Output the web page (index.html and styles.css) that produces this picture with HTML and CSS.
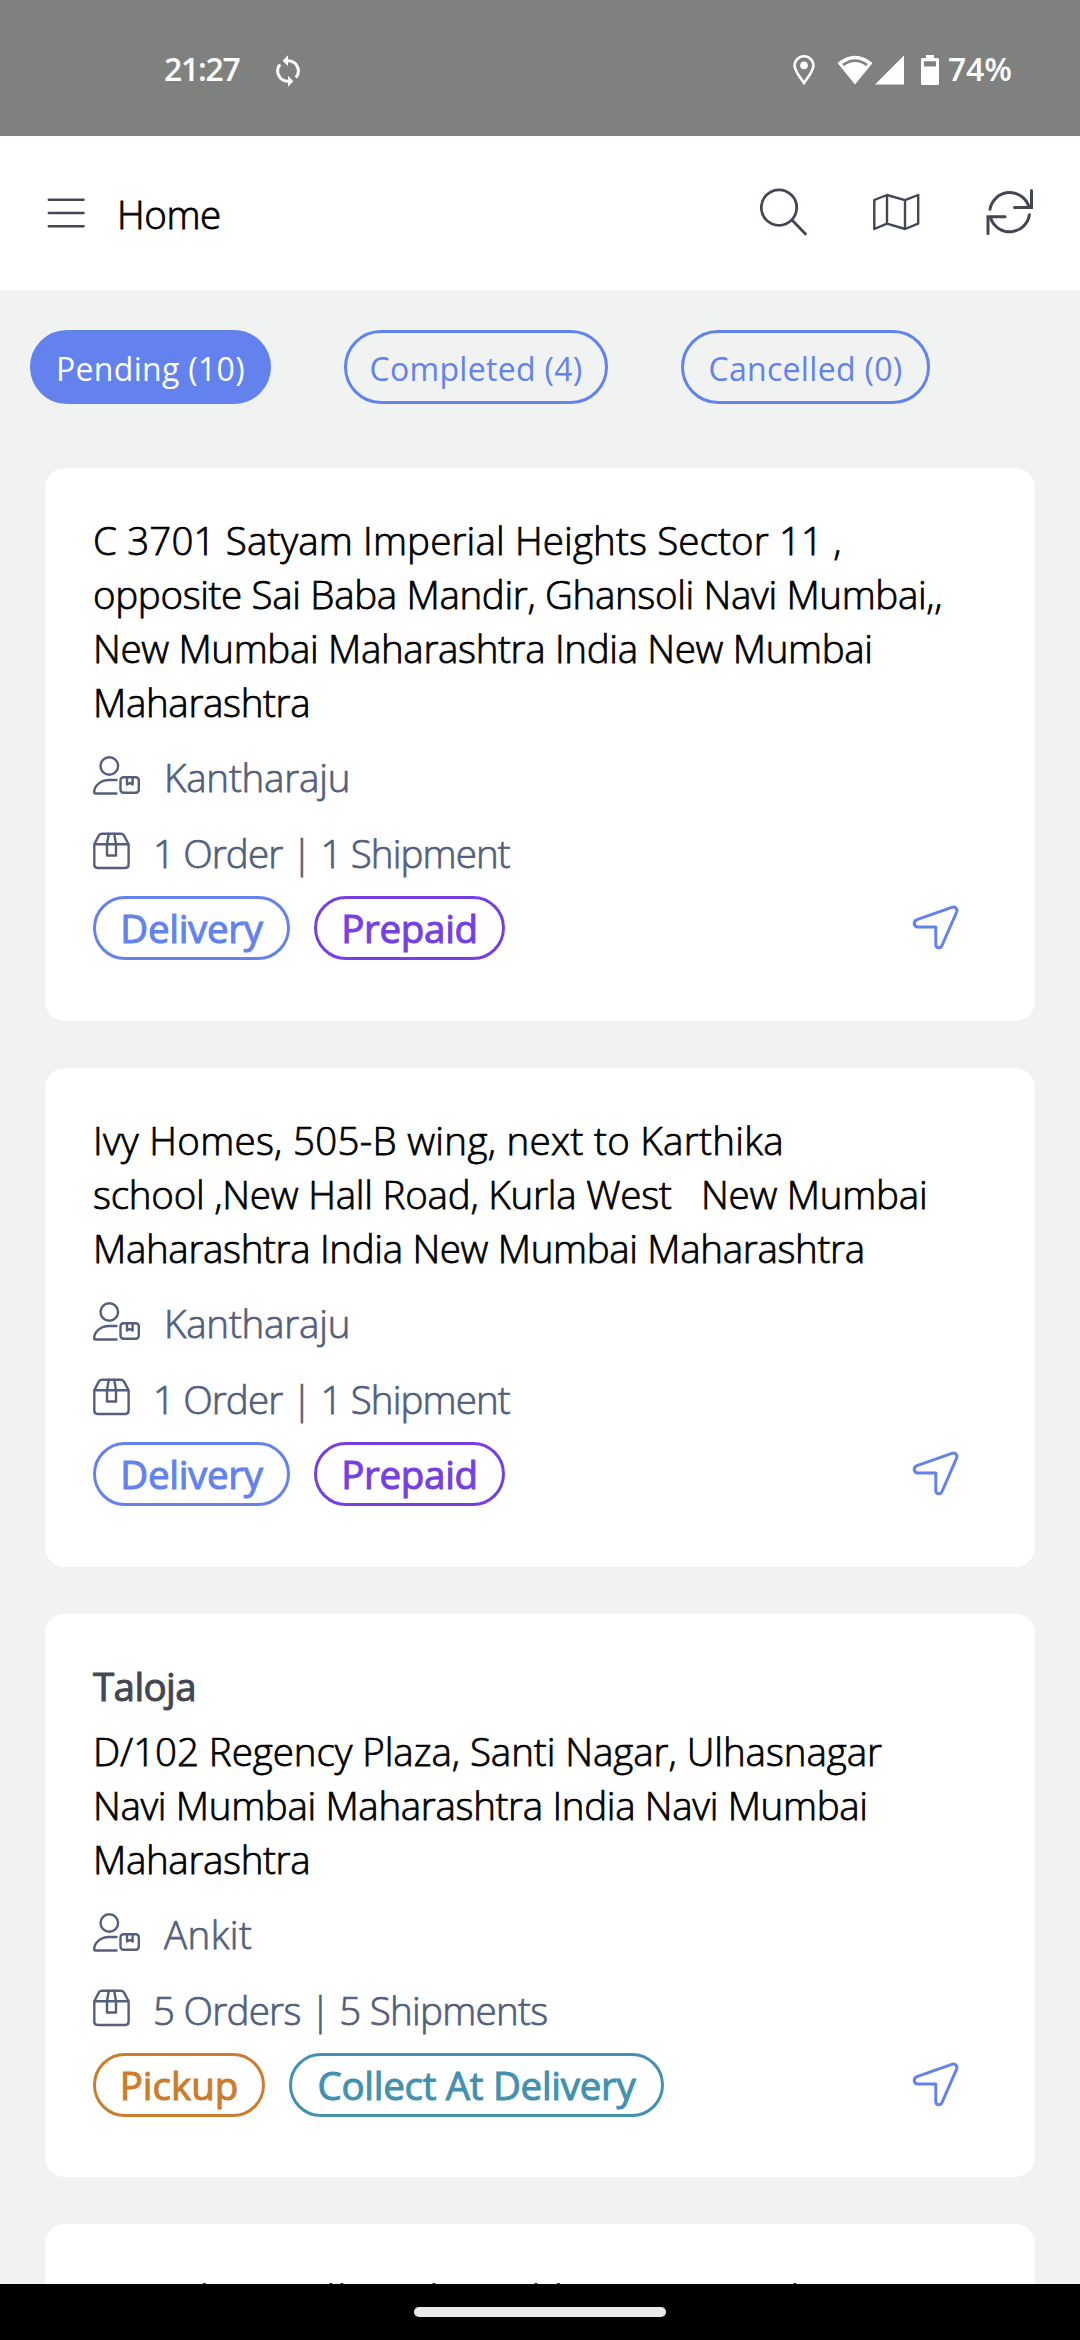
FILE: index.html
```html
<!DOCTYPE html>
<html lang="en">
<head>
<meta charset="utf-8">
<title>Home</title>
<link rel="stylesheet" href="styles.css">
</head>
<body>
<svg class="defs" aria-hidden="true">
  <symbol id="i-person" viewBox="0 0 48 54">
    <circle cx="16.3" cy="16" r="8.8"/>
    <path d="M23.5 30H16C8 30 1.2 35.5 1.2 42.2Q1.2 43.5 2.5 43.5H23.5"/>
    <rect x="27.5" y="27.3" width="18.3" height="15.5" rx="3"/>
    <path d="M34 27.3V34.5L36.8 33L39.6 34.5V27.3"/>
  </symbol>
  <symbol id="i-package" viewBox="0 0 38 54">
    <path d="M1.3 18.2L5.8 9.6Q6.7 7.7 8.8 7.7H28Q30 7.7 31 9.6L35.6 18.2V38.6Q35.6 42 32.2 42H4.7Q1.3 42 1.3 38.6ZM1.3 18.2H35.6"/>
    <path d="M15.8 7.7L14 18.2V29.5H23V18.2L21.2 7.7"/>
  </symbol>
  <symbol id="i-send" viewBox="0 0 48 48">
    <path d="M5 17.6L40.5 5.2Q43 4.6 44.3 6.3Q45.5 7.8 44.7 9.8L30 43.5Q28.8 46.2 26.3 45.8Q23.8 45.3 23.8 42.5V25H5.8Q3 25 2.3 22.2Q1.8 18.9 5 17.6Z"/>
  </symbol>
</svg>

<div class="screen">
  <div class="status">
    <span class="clock">21:27</span>
    <svg class="st-sync" width="24" height="32" viewBox="0 0 24 32" fill="none" stroke="#fff" stroke-width="3">
      <path d="M4 9.4A10.3 10.3 0 0 0 12 26.2M20 22.6A10.3 10.3 0 0 0 12 5.8"/>
      <path d="M12 0.3V11.3L6.7 5.8ZM12 20.7V31.7L17.3 26.2Z" fill="#fff" stroke="none"/>
    </svg>
    <span class="grow"></span>
    <svg class="st-pin" width="22" height="30" viewBox="0 0 22 30" fill="none" stroke="#fff" stroke-width="2.6">
      <path d="M11 28C7 22 1.6 16.5 1.6 10.6A9.4 9.3 0 0 1 20.4 10.6C20.4 16.5 15 22 11 28Z"/>
      <circle cx="11" cy="10.4" r="3.8" fill="#fff" stroke="none"/>
    </svg>
    <svg class="st-wifi" width="36" height="30" viewBox="0 0 36 30" fill="#fff">
      <path fill-rule="evenodd" d="M18 29.5L0.5 8Q18-6.4 35.5 8ZM5.2 8.900L6.900 11.100Q18 3 29.100 11.100L30.800 8.900Q18-0.500 5.200 8.900Z"/>
    </svg>
    <svg class="st-signal" width="29" height="30" viewBox="0 0 29 30" fill="#fff"><path d="M0 29.500L29 0.500V29.500Z"/></svg>
    <svg class="st-battery" width="18" height="30" viewBox="0 0 18 30" fill="#fff">
      <path fill-rule="evenodd" d="M5 0H13V3H16.500Q18 3 18 4.500V28.500Q18 30 16.500 30H1.500Q0 30 0 28.500V4.500Q0 3 1.500 3H5ZM3 6.300V11.500H15V6.300Z"/>
    </svg>
    <span class="battery-text">74%</span>
  </div>

  <header class="appbar">
    <svg class="menu" width="38" height="32" viewBox="0 0 38 32" fill="none" stroke="#434753" stroke-width="2.500" stroke-linecap="round"><path d="M1.800 3.700H36.500M1.800 17H36.500M1.800 30.200H36.500"/></svg>
    <h1 class="title">Home</h1>
    <span class="grow"></span>
    <svg width="48" height="48" viewBox="760 188 48 48" fill="none" stroke="#434753" stroke-width="2.800" stroke-linecap="round"><circle cx="779" cy="207.600" r="17.700"/><path d="M792 220L805.500 234"/></svg>
    <svg class="ab-map" width="48" height="48" viewBox="872 188 48 48" fill="none" stroke="#434753" stroke-width="2.400" stroke-linejoin="round"><path d="M874.300 200L887 195L905 200.200L918.200 195V223.700L905 229L887 223.700L874.300 229ZM887 195V223.700M905 200.200V229"/></svg>
    <svg class="ab-refresh" width="50" height="50" viewBox="985 187 50 50" fill="none" stroke="#434753" stroke-width="3" stroke-linecap="round"><path d="M990 209.300A20 20 0 0 1 1028.800 206.500M1029.400 214.800A20 20 0 0 1 990.800 218.500"/><path d="M1031.500 190.500V207.500H1014.500M988 233.500V216.800H1005"/></svg>
  </header>

  <nav class="tabs">
    <a class="tab active">Pending (10)</a>
    <a class="tab completed">Completed (4)</a>
    <a class="tab cancelled">Cancelled (0)</a>
  </nav>

  <main class="list">
    <article class="card">
      <p class="address"><span class="ls1">C 3701 Satyam Imperial Heights Sector 11 ,</span><span class="ls2">opposite Sai Baba Mandir, Ghansoli Navi Mumbai,,</span><span class="ls2">New Mumbai Maharashtra India New Mumbai</span><span class="ls2">Maharashtra</span></p>
      <div class="row"><svg class="icon person"><use href="#i-person"/></svg><span class="name">Kantharaju</span></div>
      <div class="row orders"><svg class="icon package"><use href="#i-package"/></svg><span class="count">1 Order | 1 Shipment</span></div>
      <div class="foot"><span class="pill delivery">Delivery</span><span class="pill prepaid">Prepaid</span><span class="grow"></span><svg class="send"><use href="#i-send"/></svg></div>
    </article>

    <article class="card">
      <p class="address"><span class="ls3">Ivy Homes, 505-B wing, next to Karthika</span><span class="ls4">school ,New Hall Road, Kurla West &nbsp; New Mumbai</span><span class="ls2">Maharashtra India New Mumbai Maharashtra</span></p>
      <div class="row"><svg class="icon person"><use href="#i-person"/></svg><span class="name">Kantharaju</span></div>
      <div class="row orders"><svg class="icon package"><use href="#i-package"/></svg><span class="count">1 Order | 1 Shipment</span></div>
      <div class="foot"><span class="pill delivery">Delivery</span><span class="pill prepaid">Prepaid</span><span class="grow"></span><svg class="send"><use href="#i-send"/></svg></div>
    </article>

    <article class="card named">
      <h2 class="place">Taloja</h2>
      <p class="address"><span class="ls5">D/102 Regency Plaza, Santi Nagar, Ulhasnagar</span><span class="ls2">Navi Mumbai Maharashtra India Navi Mumbai</span><span class="ls2">Maharashtra</span></p>
      <div class="row"><svg class="icon person"><use href="#i-person"/></svg><span class="name short">Ankit</span></div>
      <div class="row orders"><svg class="icon package"><use href="#i-package"/></svg><span class="count plural">5 Orders | 5 Shipments</span></div>
      <div class="foot"><span class="pill pickup">Pickup</span><span class="pill collect">Collect At Delivery</span><span class="grow"></span><svg class="send"><use href="#i-send"/></svg></div>
    </article>

    <article class="card">
      <p class="address peek"><span>l</span><span>l</span><span>l</span><span>l</span><span>l</span><span>l</span><span>l</span></p>
    </article>
  </main>

  <footer class="navbar"><span class="handle"></span></footer>
</div>
</body>
</html>
```
FILE: styles.css
```css
* { box-sizing: border-box; margin: 0; padding: 0; }

body {
  width: 1080px;
  height: 2340px;
  overflow: hidden;
  font-family: "Open Sans", "Noto Sans", sans-serif;
}

svg { display: block; flex: none; }
.defs { display: none; }
.grow { flex: 1; }

.screen {
  display: flex;
  flex-direction: column;
  width: 1080px;
  height: 2340px;
  background: #f0f3f2;
}

/* System status bar */
.status {
  flex: none;
  display: flex;
  align-items: flex-start;
  height: 136px;
  padding: 55px 68px 0 164px;
  background: #7f817f;
  color: #fff;
  font-size: 32px;
  font-weight: 600;
  line-height: 28px;
  white-space: nowrap;
}
.clock { width: 112px; letter-spacing: -1.3px; }
.st-pin { margin-right: 22px; }
.st-wifi { margin-right: 2px; }
.st-signal { margin-right: 17px; }
.battery-text { width: 64px; margin-left: 9px; letter-spacing: -0.2px; }

/* App bar */
.appbar {
  flex: none;
  display: flex;
  align-items: center;
  height: 154px;
  padding: 0 45px 2px 47px;
  background: #fff;
}
.title {
  margin: 4px 0 0 32px;
  font-size: 38.5px;
  font-weight: 300;
  line-height: 54px;
  letter-spacing: -0.4px;
  -webkit-text-stroke: 0.8px #000;
}
.ab-map { margin-left: 64px; }
.ab-refresh { margin-left: 65px; }

/* Filter tabs */
.tabs {
  flex: none;
  display: flex;
  height: 178px;
  padding: 40px 30px 0;
}
.tab {
  width: 241px;
  height: 74px;
  border: 3px solid #6382ee;
  border-radius: 37px;
  color: #6382ee;
  font-size: 32px;
  line-height: 71px;
  text-align: center;
  white-space: nowrap;
  letter-spacing: 0.3px;
}
.active { background: #6382ee; color: #fff; }
.completed { width: 264px; margin-left: 73px; }
.cancelled { width: 249px; margin-left: 73px; }

/* Delivery cards */
.list {
  flex: 1;
  min-height: 0;
  display: flex;
  flex-direction: column;
  gap: 47px;
  padding: 0 45px;
  overflow: hidden;
}
.card {
  flex: none;
  padding: 45px 75px 61px 48px;
  border-radius: 20px;
  background: #fff;
  font-size: 38.5px;
  line-height: 54px;
}
.named { padding-bottom: 60px; }
.address {
  font-weight: 300;
  color: #000;
  -webkit-text-stroke: 0.75px #000;
}
.address span { display: block; white-space: nowrap; }
.ls1 { letter-spacing: 0.14px; }
.ls2 { letter-spacing: -0.34px; }
.ls3 { letter-spacing: 0.3px; }
.ls4 { letter-spacing: -0.22px; }
.ls5 { letter-spacing: -0.06px; }

.place {
  margin: 0 0 11px;
  font-size: 38.5px;
  font-weight: 400;
  line-height: 54px;
  letter-spacing: -0.6px;
  color: #434753;
  -webkit-text-stroke: 1px #434753;
}
.row {
  display: flex;
  height: 54px;
  margin-top: 21px;
  color: #545f7d;
  font-weight: 300;
  white-space: nowrap;
  -webkit-text-stroke: 0.75px #545f7d;
}
.orders { margin-top: 22px; }
.icon { height: 54px; fill: none; stroke: #545f7d; stroke-width: 2.4; stroke-linejoin: round; stroke-linecap: round; }
.person { width: 48px; }
.package { width: 38px; }
.name { margin-left: 23px; letter-spacing: -0.2px; }
.short { letter-spacing: 0.45px; }
.count { margin-left: 22px; letter-spacing: -0.88px; }
.plural { letter-spacing: -0.72px; }

.foot { display: flex; height: 64px; margin-top: 16px; }
.pill {
  width: 197px;
  margin-right: 24px;
  border: 3px solid currentColor;
  border-radius: 32px;
  line-height: 58px;
  text-align: center;
  white-space: nowrap;
  letter-spacing: -0.3px;
  -webkit-text-stroke: 1px currentColor;
}
.delivery { color: #6382ee; }
.prepaid { width: 191px; color: #763fe3; }
.pickup { width: 172px; color: #cb7c2c; letter-spacing: 0; }
.collect { width: 375px; color: #4391b0; }
.send { width: 48px; height: 48px; margin-top: 6px; fill: none; stroke: #6382ee; stroke-width: 3; stroke-linejoin: round; }

/* First text line of the card that scrolls under the navigation bar */
.peek {
  display: grid;
  grid-template-columns: 126.5px 11px 92px 102px 22.5px 236.5px 20px;
  padding: 2px 0 0 107px;
}

/* Gesture navigation bar */
.navbar {
  flex: none;
  display: flex;
  justify-content: center;
  align-items: center;
  height: 56px;
  background: #000;
}
.handle { width: 252px; height: 10px; border-radius: 5px; background: #e9eaec; }
```
